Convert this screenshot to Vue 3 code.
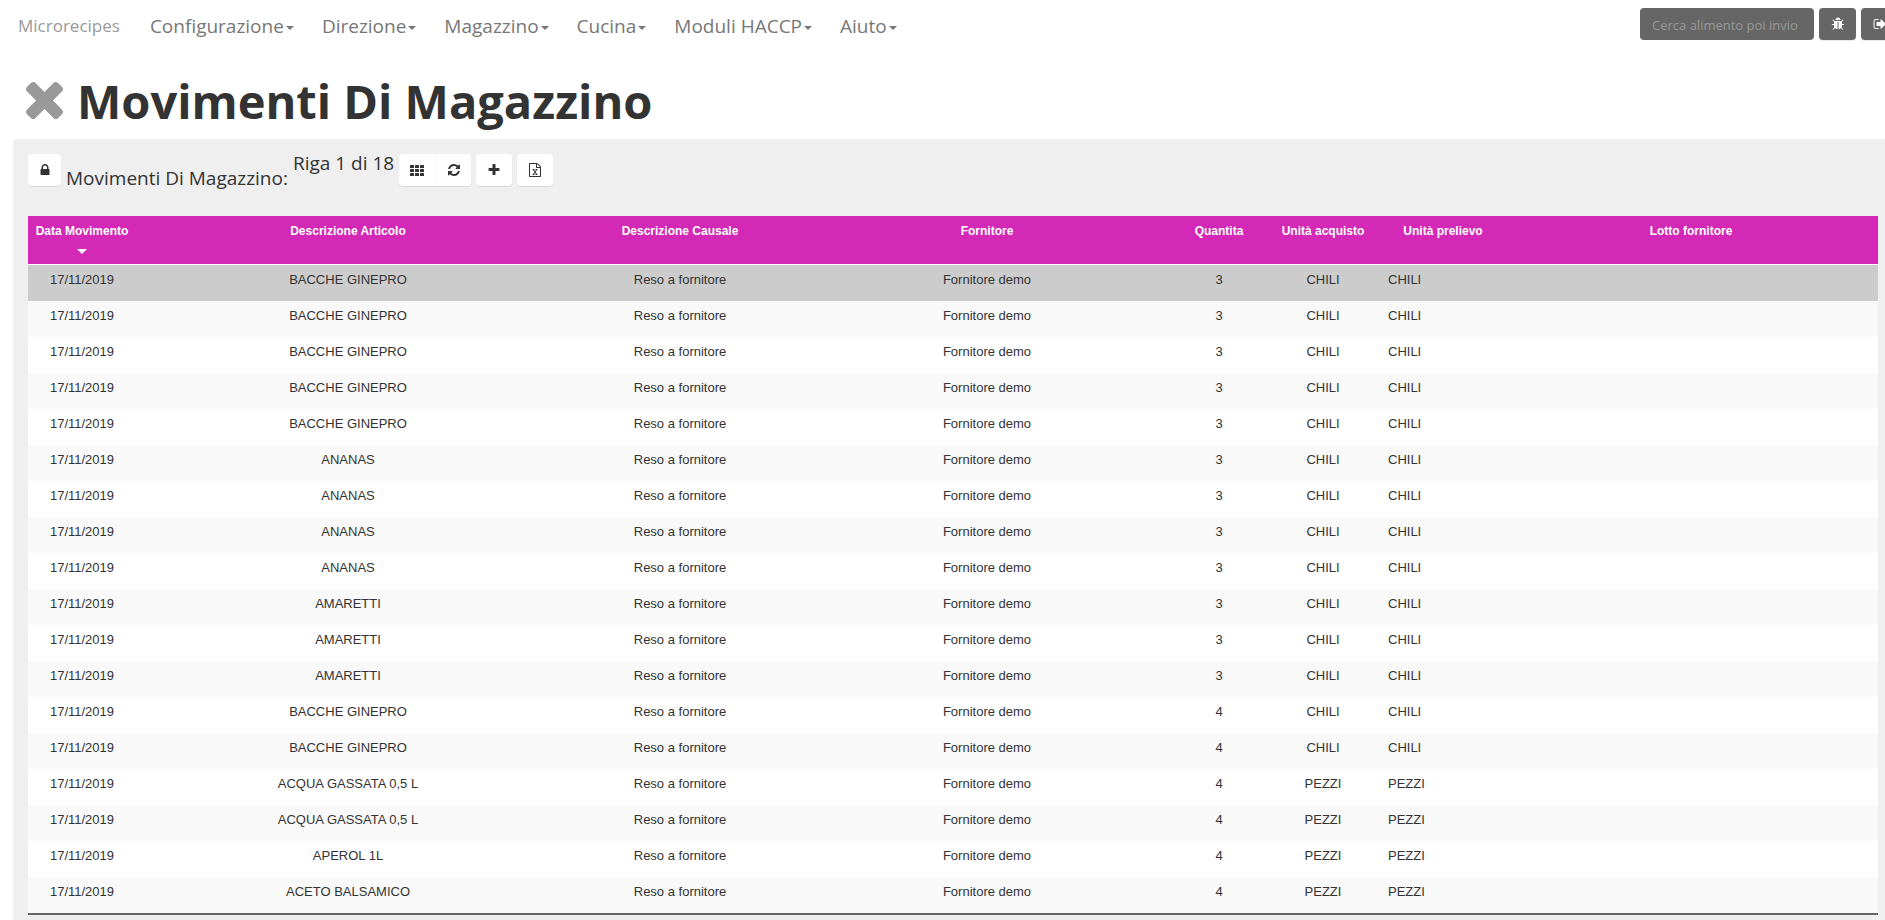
<template>
  <div class="page">
    <nav class="navbar">
      <a class="brand" href="#">Microrecipes</a>
      <ul class="menu">
        <li v-for="item in menu" :key="item">
          <a href="#">{{ item }}<span class="caret"></span></a>
        </li>
      </ul>
      <form class="tools" @submit.prevent>
        <input v-model="search" type="text" aria-label="Cerca alimento" placeholder="Cerca alimento poi invio" />
        <button type="button" class="btn dark" aria-label="Segnala un problema">
          <svg viewBox="0 0 1792 1792"><path :d="icons.bug" /></svg>
        </button>
        <button type="button" class="btn dark" aria-label="Esci">
          <svg viewBox="0 0 1792 1792"><path :d="icons.signOut" /></svg>
        </button>
      </form>
    </nav>

    <header class="title">
      <a href="#" aria-label="Chiudi">
        <svg viewBox="302 366 1188 1188"><path :d="icons.times" /></svg>
      </a>
      <h1>Movimenti Di Magazzino</h1>
    </header>

    <main class="panel">
      <div class="toolbar">
        <button type="button" class="btn narrow" aria-label="Blocca">
          <svg viewBox="-320 0 1792 1792"><path :d="icons.lock" /></svg>
        </button>
        <span class="name">Movimenti Di Magazzino:</span>
        <span class="position">Riga {{ selected + 1 }} di {{ rows.length }}</span>
        <div class="group">
          <button type="button" class="btn" aria-label="Griglia">
            <svg class="grid" viewBox="0 0 14 11">
              <template v-for="y in 3" :key="y">
                <rect v-for="x in 3" :key="x" :x="(x - 1) * 5" :y="(y - 1) * 4" width="4" height="3" rx="0.5" />
              </template>
            </svg>
          </button>
          <button type="button" class="btn" aria-label="Aggiorna">
            <svg viewBox="0 0 1792 1792"><path :d="icons.refresh" /></svg>
          </button>
        </div>
        <button type="button" class="btn" aria-label="Aggiungi">
          <svg viewBox="0 0 1792 1792"><path :d="icons.plus" /></svg>
        </button>
        <button type="button" class="btn" aria-label="Esporta in Excel">
          <svg viewBox="0 0 1792 1792"><path :d="icons.excel" /></svg>
        </button>
      </div>

      <table>
        <colgroup>
          <col v-for="col in columns" :key="col.label" :style="{ width: col.width + 'px' }" />
        </colgroup>
        <thead>
          <tr>
            <th v-for="(col, i) in columns" :key="col.label" scope="col">
              {{ col.label }}
              <span v-if="i === 0" class="sort"></span>
            </th>
          </tr>
        </thead>
        <tbody>
          <tr v-for="(row, i) in rows" :key="i" :class="{ selected: i === selected }" @click="selected = i">
            <td>17/11/2019</td>
            <td>{{ row[0] }}</td>
            <td>Reso a fornitore</td>
            <td>Fornitore demo</td>
            <td>{{ row[1] }}</td>
            <td>{{ row[2] }}</td>
            <td class="left">{{ row[2] }}</td>
            <td></td>
          </tr>
        </tbody>
      </table>
    </main>
  </div>
</template>

<script setup>
import { ref } from 'vue'

const search = ref('')
const selected = ref(0)

const menu = ['Configurazione', 'Direzione', 'Magazzino', 'Cucina', 'Moduli HACCP', 'Aiuto']

const columns = [
  { label: 'Data Movimento', width: 108 },
  { label: 'Descrizione Articolo', width: 424 },
  { label: 'Descrizione Causale', width: 240 },
  { label: 'Fornitore', width: 374 },
  { label: 'Quantita', width: 90 },
  { label: 'Unità acquisto', width: 118 },
  { label: 'Unità prelievo', width: 122 },
  { label: 'Lotto fornitore', width: 374 },
]

const rows = [
  ['BACCHE GINEPRO', 3, 'CHILI'],
  ['BACCHE GINEPRO', 3, 'CHILI'],
  ['BACCHE GINEPRO', 3, 'CHILI'],
  ['BACCHE GINEPRO', 3, 'CHILI'],
  ['BACCHE GINEPRO', 3, 'CHILI'],
  ['ANANAS', 3, 'CHILI'],
  ['ANANAS', 3, 'CHILI'],
  ['ANANAS', 3, 'CHILI'],
  ['ANANAS', 3, 'CHILI'],
  ['AMARETTI', 3, 'CHILI'],
  ['AMARETTI', 3, 'CHILI'],
  ['AMARETTI', 3, 'CHILI'],
  ['BACCHE GINEPRO', 4, 'CHILI'],
  ['BACCHE GINEPRO', 4, 'CHILI'],
  ['ACQUA GASSATA 0,5 L', 4, 'PEZZI'],
  ['ACQUA GASSATA 0,5 L', 4, 'PEZZI'],
  ['APEROL 1L', 4, 'PEZZI'],
  ['ACETO BALSAMICO', 4, 'PEZZI'],
]

const icons = {
  bug: 'M1696 960q0 26-19 45t-45 19h-224q0 171-67 290l208 209q19 19 19 45t-19 45q-18 19-45 19t-45-19l-198-197q-5 5-15 13t-42 28.500-65 36.500-82 29-97 13v-896h-128v896q-51 0-101.500-13.500t-87-33-66-39-43.500-32.500l-15-14-183 207q-20 21-48 21-24 0-43-16-19-18-20.500-44.500t15.500-46.500l202-227q-58-114-58-274h-224q-26 0-45-19t-19-45 19-45 45-19h224v-294l-173-173q-19-19-19-45t19-45 45-19 45 19l173 173h844l173-173q19-19 45-19t45 19 19 45-19 45l-173 173v294h224q26 0 45 19t19 45zm-480-576h-640q0-133 93.500-226.500t226.500-93.500 226.500 93.500 93.500 226.500z',
  signOut: 'M704 1440q0 4 1 20t.5 26.500-3 23.500-10 19.500-20.500 6.500h-320q-119 0-203.500-84.500t-84.500-203.500v-704q0-119 84.500-203.500t203.500-84.500h320q13 0 22.500 9.500t9.500 22.500q0 4 1 20t.5 26.500-3 23.500-10 19.500-20.500 6.500h-320q-66 0-113 47t-47 113v704q0 66 47 113t113 47h312l11.500 1 11.500 3 8 5.500 7 9 2 13.500zm928-544q0 26-19 45l-544 544q-19 19-45 19t-45-19-19-45v-288h-448q-26 0-45-19t-19-45v-384q0-26 19-45t45-19h448v-288q0-26 19-45t45-19 45 19l544 544q19 19 19 45z',
  times: 'M1490 1322q0 40-28 68l-136 136q-28 28-68 28t-68-28l-294-294-294 294q-28 28-68 28t-68-28l-136-136q-28-28-28-68t28-68l294-294-294-294q-28-28-28-68t28-68l136-136q28-28 68-28t68 28l294 294 294-294q28-28 68-28t68 28l136 136q28 28 28 68t-28 68l-294 294 294 294q28 28 28 68z',
  lock: 'M320 768h512v-192q0-106-75-181t-181-75-181 75-75 181v192zm832 96v576q0 40-28 68t-68 28h-960q-40 0-68-28t-28-68v-576q0-40 28-68t68-28h32v-192q0-184 132-316t316-132 316 132 132 316v192h32q40 0 68 28t28 68z',
  refresh: 'M1639 1056q0 5-1 7-64 268-268 434.500t-478 166.500q-146 0-282.500-55t-243.500-157l-129 129q-19 19-45 19t-45-19-19-45v-448q0-26 19-45t45-19h448q26 0 45 19t19 45-19 45l-137 137q71 66 161 102t187 36q134 0 250-65t186-179q11-17 53-117 8-23 30-23h192q13 0 22.500 9.500t9.500 22.500zm25-800v448q0 26-19 45t-45 19h-448q-26 0-45-19t-19-45 19-45l138-138q-148-137-349-137-134 0-250 65t-186 179q-11 17-53 117-8 23-30 23h-199q-13 0-22.500-9.500t-9.500-22.500v-7q65-268 270-434.500t480-166.500q146 0 284 55.500t245 156.500l130-129q19-19 45-19t45 19 19 45z',
  plus: 'M1600 736v192q0 40-28 68t-68 28h-416v416q0 40-28 68t-68 28h-192q-40 0-68-28t-28-68v-416h-416q-40 0-68-28t-28-68v-192q0-40 28-68t68-28h416v-416q0-40 28-68t68-28h192q40 0 68 28t28 68v416h416q40 0 68 28t28 68z',
  excel: 'M1596 380q28 28 48 76t20 88v1152q0 40-28 68t-68 28h-1344q-40 0-68-28t-28-68v-1600q0-40 28-68t68-28h896q40 0 88 20t76 48zm-444-244v376h376q-10-29-22-41l-313-313q-12-12-41-22zm384 1528v-1024h-416q-40 0-68-28t-28-68v-416h-768v1536h1280zm-979-234v106h281v-106h-75l103-161q5-7 10-16.500t7.500-13.500 3.500-4h2q1 4 5 10 2 4 4.500 7.500t6 8 6.500 8.500l107 161h-76v106h291v-106h-68l-192-273 195-282h67v-107h-279v107h74l-103 159q-4 7-10 16.500t-9 13.500l-2 3h-2q-1-4-5-10-6-11-17-23l-106-159h76v-107h-290v107h68l189 272-194 283h-68z',
}
</script>

<style>
body {
  overflow: hidden;
  background: #fff;
}
</style>

<style scoped>
* { box-sizing: border-box; }
.page {
  margin-right: -21px;
  padding: 0 13px;
  color: #333;
  font-family: "Segoe UI", "Open Sans", "Noto Sans", sans-serif;
}
a { color: #777; text-decoration: none; }
svg { display: block; width: 14px; height: 14px; fill: currentColor; }

.navbar { display: flex; align-items: center; height: 50px; padding: 2px 0 0 5px; margin-right: -5px; }
.brand { color: #999; font-size: 17px; line-height: 20px; }
.menu { display: flex; gap: 28px; margin: 0 auto 0 30px; padding: 0; list-style: none; font-size: 19px; line-height: 24px; }
.menu a { display: flex; align-items: center; gap: 2px; }
.caret { border: 4px solid transparent; border-top-color: currentColor; border-bottom: 0; margin-top: 4px; }
.tools { display: flex; gap: 5px; padding-bottom: 4px; }
.tools input {
  width: 174px;
  height: 32px;
  padding: 2px 12px 0;
  border: 0;
  border-radius: 4px;
  background: #666;
  color: #fff;
  font-family: inherit;
  font-size: 13px;
}
.tools input::placeholder { color: #999; opacity: 1; }

.btn {
  display: flex;
  align-items: center;
  justify-content: center;
  width: 36px;
  height: 32px;
  padding: 0;
  border: 0;
  border-radius: 4px;
  background: #fff;
  color: #333;
  box-shadow: 0 1px 1px rgba(0, 0, 0, 0.1);
  cursor: pointer;
}
.btn.dark { width: 37px; background: #666; color: #fff; }
.btn.narrow { width: 33px; }
.btn .grid { height: 11px; }

.title { display: flex; align-items: center; gap: 14px; height: 89px; padding: 12px 0 0 13px; }
.title svg { width: 37px; height: 37px; fill: #999; }
.title h1 { margin: 0; font-size: 47px; line-height: 58px; font-weight: 700; }

.panel { padding: 15px 15px 20px; border-radius: 4px; background: #efefef; }
.toolbar { display: flex; align-items: flex-start; gap: 5px; height: 62px; }
.toolbar span { font-size: 19px; line-height: 24px; white-space: nowrap; }
.toolbar .name { padding-top: 12px; }
.toolbar .position { margin-top: -3px; }
.group { display: flex; }
.group .btn { border-radius: 4px 0 0 4px; }
.group .btn + .btn { border-left: 1px solid #f8f8f8; border-radius: 0 4px 4px 0; }

table {
  width: 100%;
  border-collapse: separate;
  border-spacing: 0;
  border-bottom: 2px solid #666;
  table-layout: fixed;
  font-family: "Liberation Sans", Arial, sans-serif;
  font-size: 13px;
  line-height: 20px;
}
th {
  height: 49px;
  padding: 5px 5px 3px;
  border-bottom: 1px solid #fff;
  background: #d429b6;
  color: #fff;
  font-size: 12px;
  vertical-align: top;
  white-space: nowrap;
}
.sort { display: block; width: 10px; margin: 8px auto 0; border: 5px solid transparent; border-top-color: #fff; border-bottom: 0; }
td { height: 36px; padding: 5px; background: #fff; text-align: center; vertical-align: top; }
td.left { padding-left: 6px; text-align: left; }
tbody tr:nth-child(even) td { background: #f9f9f9; }
tbody tr.selected td { background: #ccc; }
</style>
